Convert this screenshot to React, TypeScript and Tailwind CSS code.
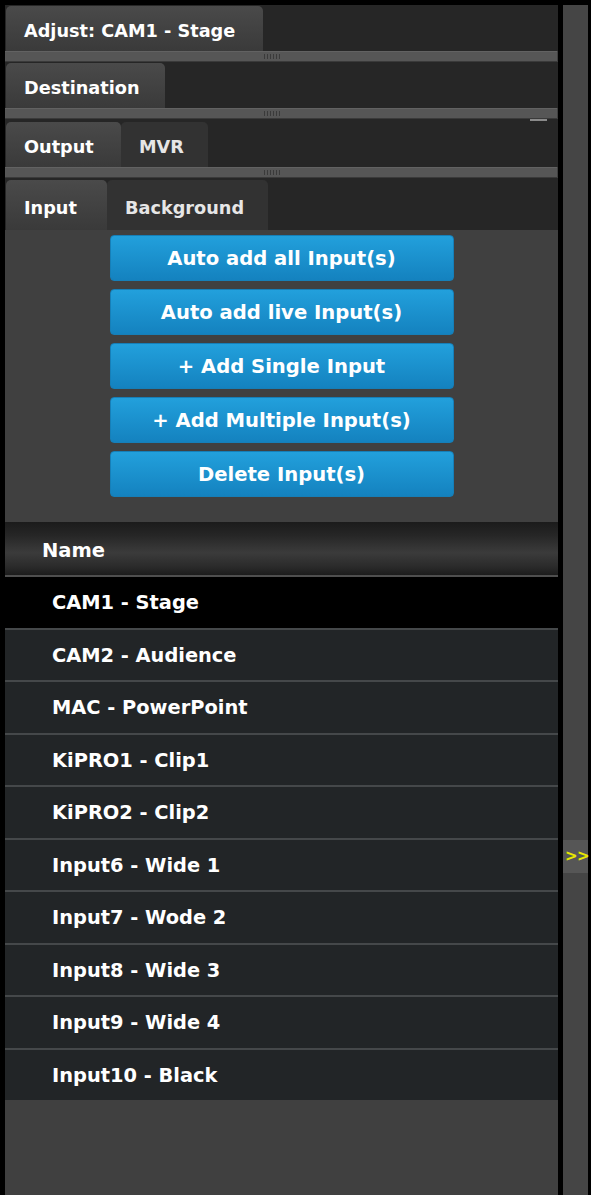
import React from "react";

type Tab = { label: string; width: string; active?: boolean };

function TabBar({ tabs, barClass }: { tabs: Tab[]; barClass: string }) {
  return (
    <div className={`flex items-end bg-[#262626] pl-[1px] ${barClass}`}>
      {tabs.map((t) => (
        <div
          key={t.label}
          className={`h-full flex items-center pl-[18px] pt-[6px] rounded-t-[5px] text-[17.7px] whitespace-nowrap ${t.width} ${
            t.active
              ? "bg-gradient-to-b from-[#4a4a4a] to-[#3a3a3a] text-white"
              : "bg-[#323232] text-[#e6e6e6]"
          }`}
        >
          {t.label}
        </div>
      ))}
    </div>
  );
}

function Splitter() {
  return (
    <div className="h-[11px] flex items-center bg-[#565656] border-t border-t-[#626262] border-b border-b-[#3a3a3a] mr-[1px]">
      <div className="ml-[259px] w-[17px] h-[5px] bg-[repeating-linear-gradient(90deg,#3a3a3a_0_1px,transparent_1px_3px)]" />
    </div>
  );
}

const buttons = [
  "Auto add all Input(s)",
  "Auto add live Input(s)",
  "+ Add Single Input",
  "+ Add Multiple Input(s)",
  "Delete Input(s)",
];

const rows = [
  "CAM1 - Stage",
  "CAM2 - Audience",
  "MAC - PowerPoint",
  "KiPRO1 - Clip1",
  "KiPRO2 - Clip2",
  "Input6 - Wide 1",
  "Input7 - Wode 2",
  "Input8 - Wide 3",
  "Input9 - Wide 4",
  "Input10 - Black",
];

export default function App() {
  return (
    <div className="w-[591px] h-[1195px] bg-black flex pt-[5px] pl-[5px] overflow-hidden font-['DejaVu_Sans',sans-serif] font-bold text-white">
      {/* main panel */}
      <div className="w-[553px] h-full flex flex-col bg-[#404040]">
        <TabBar barClass="h-[46px] pt-[1px]" tabs={[{ label: "Adjust: CAM1 - Stage", width: "w-[257px]", active: true }]} />
        <Splitter />
        <TabBar barClass="h-[46px] pt-[1px]" tabs={[{ label: "Destination", width: "w-[159px]", active: true }]} />
        <Splitter />
        <div className="h-[2px] bg-[#262626] flex justify-end pr-[11px]">
          <div className="w-[17px] h-[2px] bg-[#8a8a8a]" />
        </div>
        <TabBar
          barClass="h-[46px] pt-[1px]"
          tabs={[
            { label: "Output", width: "w-[115px]", active: true },
            { label: "MVR", width: "w-[87px]" },
          ]}
        />
        <Splitter />
        <TabBar
          barClass="h-[52px] pt-[2px]"
          tabs={[
            { label: "Input", width: "w-[101px]", active: true },
            { label: "Background", width: "w-[161px]" },
          ]}
        />

        {/* action buttons */}
        <div className="flex flex-col items-center gap-[8px] pt-[5px] pb-[25px] bg-[#404040]">
          {buttons.map((b) => (
            <button
              key={b}
              className="w-[344px] h-[46px] rounded-[4px] border border-[#167fb8] bg-gradient-to-b from-[#22a0dc] to-[#1482bf] text-white text-[19.6px] font-bold flex items-center justify-center pt-[1px]"
            >
              {b}
            </button>
          ))}
        </div>

        {/* input list */}
        <div className="h-[53px] flex items-center pl-[37px] pt-[4px] text-[19.5px] bg-[linear-gradient(to_bottom,#1b1b1b_0%,#262626_25%,#3b3b3b_58%,#2a2a2a_85%,#1c1c1c_100%)]">
          Name
        </div>
        {rows.map((r, i) => (
          <div
            key={r}
            className={`h-[52.5px] flex items-center pl-[47px] pt-[1px] text-[19.4px] border-t-2 ${
              i === 0 ? "bg-black border-t-[#4f4f4f]" : "bg-[#222527] border-t-[#45484a]"
            }`}
          >
            {r}
          </div>
        ))}
      </div>

      <div className="w-[5px]" />

      {/* collapse strip */}
      <div className="w-[25px] h-full bg-[#454545] flex flex-col">
        <div className="h-[835px]" />
        <div className="h-[33px] bg-[#565656] flex items-center pl-[2px] text-[15px] text-[#e8e800] font-['DejaVu_Sans',sans-serif] font-bold tracking-[-0.5px]">
          &gt;&gt;
        </div>
      </div>
    </div>
  );
}
